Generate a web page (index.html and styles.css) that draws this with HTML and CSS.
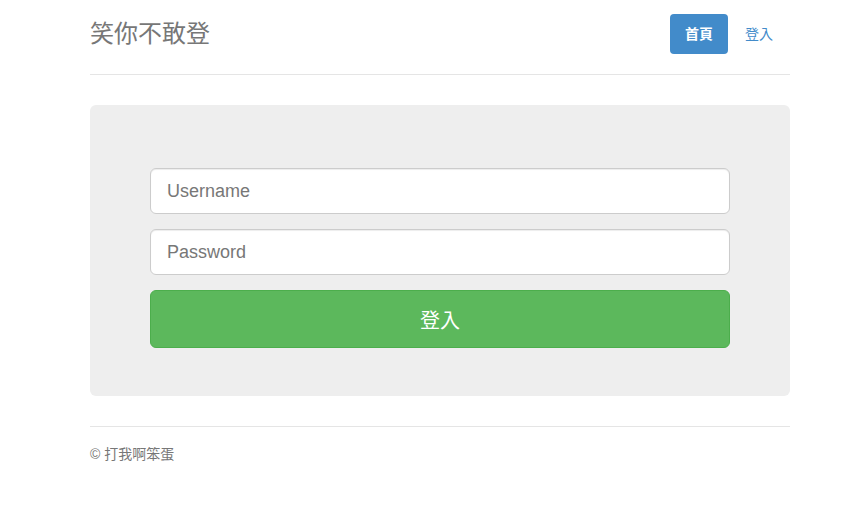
FILE: index.html
```html
<!DOCTYPE html>
<html lang="zh-Hant">
<head>
<meta charset="utf-8">
<title>笑你不敢登</title>
<link rel="stylesheet" href="styles.css">
</head>
<body>
<div class="container">
  <header class="header">
    <h3 class="brand">笑你不敢登</h3>
    <nav class="pills">
      <a class="pill active" href="#">首頁</a>
      <a class="pill" href="#">登入</a>
    </nav>
  </header>
  <main class="jumbotron">
    <form class="login">
      <input class="field" type="text" placeholder="Username">
      <input class="field" type="password" placeholder="Password">
      <button class="submit" type="button">登入</button>
    </form>
  </main>
  <footer class="footer">© 打我啊笨蛋</footer>
</div>
</body>
</html>
```
FILE: styles.css
```css
* { box-sizing: border-box; }
html, body { margin: 0; }
body {
  padding: 0 0 0 13px;
  background: #fff;
  color: #333;
  font-family: "Liberation Sans", "Noto Sans CJK TC", sans-serif;
  font-size: 14px;
  line-height: 20px;
}
.container {
  width: 700px;
  margin: 0 auto;
}
.header {
  display: flex;
  justify-content: space-between;
  align-items: center;
  padding: 14px 0 20px;
  border-bottom: 1px solid #e5e5e5;
  margin-bottom: 30px;
}
.brand {
  margin: 0;
  font-size: 24px;
  font-weight: 400;
  line-height: 40px;
  color: #777;
}
.pills {
  display: flex;
  gap: 2px;
  margin-right: 2px;
}
.pill {
  display: block;
  padding: 10px 15px;
  border-radius: 4px;
  color: #428bca;
  text-decoration: none;
  font-size: 14px;
  line-height: 20px;
}
.pill.active {
  background: #428bca;
  color: #fff;
  font-weight: 700;
}
.jumbotron {
  background: #eee;
  border-radius: 6px;
  padding: 63px 60px 48px;
  margin-bottom: 30px;
}
.login {
  display: flex;
  flex-direction: column;
  gap: 15px;
}
.field {
  display: block;
  width: 100%;
  height: 46px;
  padding: 10px 16px;
  font-family: "Liberation Sans", "Noto Sans CJK TC", sans-serif;
  font-size: 18px;
  color: #555;
  background: #fff;
  border: 1px solid #ccc;
  border-radius: 6px;
  box-shadow: inset 0 1px 1px rgba(0,0,0,.075);
}
.field::placeholder { color: #777; }
.submit {
  display: block;
  width: 100%;
  height: 58px;
  font-family: "Liberation Sans", "Noto Sans CJK TC", sans-serif;
  font-size: 20px;
  color: #fff;
  background: #5cb85c;
  border: 1px solid #4cae4c;
  border-radius: 6px;
}
.footer {
  border-top: 1px solid #e5e5e5;
  padding-top: 17px;
  color: #777;
  font-size: 14px;
}
```
